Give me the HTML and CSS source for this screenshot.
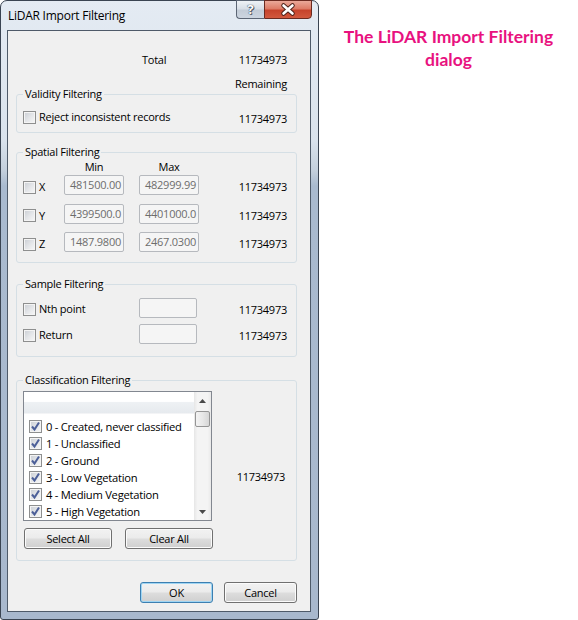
FILE: index.html
```html
<!DOCTYPE html>
<html lang="en">
<head>
    <meta charset="UTF-8">
    <title>LiDAR Import Filtering</title>
    <link rel="stylesheet" href="styles.css">
</head>
<body>
<div class="page">
    <div class="window">
        <div class="titlebar">
            <span class="title">LiDAR Import Filtering</span>
            <div class="caption-btns">
                <span class="cap-help">?</span>
                <span class="cap-close">
                    <svg width="46" height="17" viewBox="0 0 46 17">
                        <path d="M18.5 4.5 L27.5 12.5 M27.5 4.5 L18.5 12.5" stroke="#4a2018" stroke-width="4.5" stroke-linecap="round"/>
                        <path d="M18.5 4.5 L27.5 12.5 M27.5 4.5 L18.5 12.5" stroke="#ffffff" stroke-width="2.6" stroke-linecap="round"/>
                    </svg>
                </span>
            </div>
        </div>
        <div class="frame">
            <div class="client">
                <div class="totals">
                    <div class="total-row"><span class="total-label">Total</span><span class="count">11734973</span></div>
                    <div class="remain-row">Remaining</div>
                </div>

                <fieldset class="group validity">
                    <legend>Validity Filtering</legend>
                    <div class="check-row">
                        <label class="opt"><span class="check"></span>Reject inconsistent records</label>
                        <span class="count">11734973</span>
                    </div>
                </fieldset>

                <fieldset class="group spatial">
                    <legend>Spatial Filtering</legend>
                    <div class="range-head"><span></span><span>Min</span><span>Max</span></div>
                    <div class="range-row">
                        <label class="opt"><span class="check"></span>X</label>
                        <div class="field">481500.00</div>
                        <div class="field">482999.99</div>
                        <span class="count">11734973</span>
                    </div>
                    <div class="range-row">
                        <label class="opt"><span class="check"></span>Y</label>
                        <div class="field">4399500.0</div>
                        <div class="field">4401000.0</div>
                        <span class="count">11734973</span>
                    </div>
                    <div class="range-row">
                        <label class="opt"><span class="check"></span>Z</label>
                        <div class="field">1487.9800</div>
                        <div class="field">2467.0300</div>
                        <span class="count">11734973</span>
                    </div>
                </fieldset>

                <fieldset class="group sample">
                    <legend>Sample Filtering</legend>
                    <div class="sample-row">
                        <label class="opt"><span class="check"></span>Nth point</label>
                        <div class="field empty"></div>
                        <span class="count">11734973</span>
                    </div>
                    <div class="sample-row">
                        <label class="opt"><span class="check"></span>Return</label>
                        <div class="field empty"></div>
                        <span class="count">11734973</span>
                    </div>
                </fieldset>

                <fieldset class="group classes">
                    <legend>Classification Filtering</legend>
                    <div class="class-body">
                        <div class="listbox">
                            <div class="list-area">
                                <div class="list-header"></div>
                                <ul class="list-items">
                                    <li><span class="check on"><svg width="11" height="11" viewBox="0 0 11 11"><path d="M2 5.5 L4.5 8.5 L9 1.5" fill="none" stroke="#4c5f98" stroke-width="2"/></svg></span>0 - Created, never classified</li>
                                    <li><span class="check on"><svg width="11" height="11" viewBox="0 0 11 11"><path d="M2 5.5 L4.5 8.5 L9 1.5" fill="none" stroke="#4c5f98" stroke-width="2"/></svg></span>1 - Unclassified</li>
                                    <li><span class="check on"><svg width="11" height="11" viewBox="0 0 11 11"><path d="M2 5.5 L4.5 8.5 L9 1.5" fill="none" stroke="#4c5f98" stroke-width="2"/></svg></span>2 - Ground</li>
                                    <li><span class="check on"><svg width="11" height="11" viewBox="0 0 11 11"><path d="M2 5.5 L4.5 8.5 L9 1.5" fill="none" stroke="#4c5f98" stroke-width="2"/></svg></span>3 - Low Vegetation</li>
                                    <li><span class="check on"><svg width="11" height="11" viewBox="0 0 11 11"><path d="M2 5.5 L4.5 8.5 L9 1.5" fill="none" stroke="#4c5f98" stroke-width="2"/></svg></span>4 - Medium Vegetation</li>
                                    <li><span class="check on"><svg width="11" height="11" viewBox="0 0 11 11"><path d="M2 5.5 L4.5 8.5 L9 1.5" fill="none" stroke="#4c5f98" stroke-width="2"/></svg></span>5 - High Vegetation</li>
                                </ul>
                            </div>
                            <div class="vscroll">
                                <div class="arrow"><svg width="7" height="4" viewBox="0 0 7 4"><path d="M0 4 L3.5 0 L7 4 Z" fill="#4a4a4a"/></svg></div>
                                <div class="track"><div class="thumb"></div></div>
                                <div class="arrow"><svg width="7" height="4" viewBox="0 0 7 4"><path d="M0 0 L7 0 L3.5 4 Z" fill="#4a4a4a"/></svg></div>
                            </div>
                        </div>
                        <span class="count class-count">11734973</span>
                    </div>
                    <div class="class-btns">
                        <button class="btn wide">Select All</button>
                        <button class="btn wide">Clear All</button>
                    </div>
                </fieldset>

                <div class="footer">
                    <button class="btn default">OK</button>
                    <button class="btn">Cancel</button>
                </div>
            </div>
        </div>
    </div>
    <div class="caption">The LiDAR Import Filtering<br>dialog</div>
</div>
</body>
</html>
```

FILE: styles.css
```css
body {
    margin: 0;
    font-family: "Open Sans", "Noto Sans", sans-serif;
    font-size: 11px;
    letter-spacing: -0.25px;
    color: #000;
    background: #fff;
}
.page {
    display: flex;
}
.window {
    width: 319px;
    height: 620px;
    box-sizing: border-box;
    border: 1px solid #3a4452;
    border-radius: 7px 7px 3px 3px;
    background: linear-gradient(to bottom, #e4ebf3 0, #d9e2ec 140px, #c3cfdc 170px, #a9bacf 185px, #a8b8cd 100%);
    display: flex;
    flex-direction: column;
}
.titlebar {
    height: 29px;
    display: flex;
    align-items: flex-start;
    padding: 0 6px 0 7px;
}
.title {
    line-height: 29px;
    font-size: 12px;
}
.caption-btns {
    margin-left: auto;
    margin-top: -1px;
    display: flex;
    height: 19px;
}
.cap-help {
    width: 28px;
    height: 19px;
    box-sizing: border-box;
    border: 1px solid #5b6574;
    border-right: none;
    border-radius: 0 0 0 4px;
    background: linear-gradient(to bottom, #eef2f6 0, #d8dfe7 45%, #c3ccd7 55%, #ccd5e0 100%);
    color: #fff;
    font-weight: bold;
    font-size: 13px;
    line-height: 17px;
    text-align: center;
    text-shadow: 0 0 1px #3b4350, 0 0 1px #3b4350, 1px 1px 0 #5b6574;
}
.cap-close {
    width: 48px;
    height: 19px;
    box-sizing: border-box;
    border: 1px solid #6a2a20;
    border-radius: 0 0 4px 0;
    background: linear-gradient(to bottom, #eaa999 0, #dd7c67 45%, #c6432b 55%, #d2583d 100%);
    display: flex;
    align-items: center;
    justify-content: center;
}
.frame {
    flex: 1;
    display: flex;
    padding: 0 7px 7px 6px;
}
.client {
    flex: 1;
    border: 1px solid #4e5a69;
    background: #f0f0f0;
}
.totals {
    height: 56px;
    padding-top: 21px;
    box-sizing: border-box;
}
.total-row {
    display: flex;
    line-height: 16px;
    padding: 0 23px 0 134px;
}
.total-row .count {
    margin-left: auto;
}
.remain-row {
    margin-top: 8px;
    line-height: 16px;
    text-align: right;
    padding-right: 23px;
}
.count {
    line-height: 16px;
    white-space: nowrap;
}

/* group boxes */
.group {
    margin: 0 13px 0 8px;
    padding: 0 9px 0 6px;
    border: 1px solid #d5dfe5;
    border-radius: 3px;
    min-width: 0;
}
.group legend {
    padding: 0 2px;
    line-height: 14px;
}
.validity {
    padding-top: 6px;
    padding-bottom: 5px;
}
.spatial {
    margin-top: 12px;
    padding-bottom: 10px;
}
.sample {
    margin-top: 14px;
    padding-top: 7px;
    padding-bottom: 12px;
}
.classes {
    margin-top: 16px;
    padding-top: 4px;
    padding-bottom: 11px;
}

.opt {
    display: flex;
    align-items: center;
    gap: 3px;
    line-height: 16px;
    white-space: nowrap;
}
.check {
    width: 13px;
    height: 13px;
    box-sizing: border-box;
    border: 1px solid #8e8f8f;
    background: linear-gradient(135deg, #c9cdd3 0, #e3e5e8 50%, #f8f8f8 100%);
    box-shadow: inset 0 0 0 1px #f4f4f4;
    flex: none;
    display: flex;
    align-items: center;
    justify-content: center;
}
.check-row {
    height: 20px;
    display: flex;
    align-items: center;
    justify-content: space-between;
}
.check-row .count {
    padding-top: 3px;
}

.range-head {
    display: grid;
    grid-template-columns: 41px 75px 60px;
    padding-top: 1px;
    line-height: 14px;
}
.range-head span {
    width: 60px;
    text-align: center;
}
.range-row {
    display: grid;
    grid-template-columns: 41px 75px 60px 1fr;
    align-items: start;
    height: 20px;
    margin-top: 8.5px;
}
.range-head + .range-row {
    margin-top: 1px;
}
.range-row .field {
    width: 60px;
}
.range-row .opt {
    margin-top: 4px;
}
.range-row .count,
.sample-row .count {
    justify-self: end;
    margin-top: 4px;
}
.field {
    height: 20px;
    box-sizing: border-box;
    border: 1px solid #b6b9be;
    border-radius: 2px;
    background: #f5f5f5;
    color: #6d6d6d;
    padding: 0 5px;
    line-height: 18px;
    overflow: hidden;
    white-space: nowrap;
}
.sample-row {
    display: grid;
    grid-template-columns: 116px 58px 1fr;
    align-items: start;
    height: 20px;
}
.sample-row + .sample-row {
    margin-top: 6px;
}
.sample-row .opt {
    margin-top: 3px;
}

/* classification list */
.class-body {
    display: flex;
    align-items: flex-start;
}
.listbox {
    width: 189px;
    height: 130px;
    box-sizing: border-box;
    border: 1px solid #828790;
    background: #fff;
    display: flex;
}
.list-area {
    flex: 1;
    min-width: 0;
}
.list-header {
    height: 22px;
    background: linear-gradient(to bottom, #fff 0, #fff 45%, #eef1f4 50%, #e6eaee 100%);
    border-bottom: 1px solid #f3f4f6;
    box-sizing: border-box;
}
.list-items {
    list-style: none;
    margin: 0;
    padding: 4px 0 0 5px;
}
.list-items li {
    height: 17px;
    display: flex;
    align-items: center;
    gap: 4px;
    white-space: nowrap;
    font-size: 11.2px;
}
.check.on svg {
    display: block;
}
.vscroll {
    width: 17px;
    display: flex;
    flex-direction: column;
    background: linear-gradient(to right, #e6e6e6 0, #f4f4f4 20%, #f4f4f4 80%, #e9e9e9 100%);
}
.arrow {
    height: 17px;
    display: flex;
    align-items: center;
    justify-content: center;
}
.track {
    flex: 1;
    padding-top: 2px;
}
.thumb {
    height: 16px;
    margin: 0 1px;
    box-sizing: border-box;
    border: 1px solid #959595;
    border-radius: 2px;
    background: linear-gradient(to right, #f3f3f3 0, #e8e8e8 50%, #d6d6d6 100%);
}
.class-count {
    margin-top: 78px;
    margin-left: auto;
    margin-right: 2px;
}
.class-btns {
    display: flex;
    gap: 13px;
    margin-top: 7px;
    padding-left: 1px;
}

/* push buttons */
.btn {
    height: 21px;
    box-sizing: border-box;
    border: 1px solid #707070;
    border-radius: 3px;
    background: linear-gradient(to bottom, #f2f2f2 0, #ebebeb 48%, #dddddd 52%, #cfcfcf 100%);
    box-shadow: inset 0 0 0 1px #fbfbfb;
    font: inherit;
    letter-spacing: inherit;
    color: #000;
    padding: 0;
    line-height: 19px;
    text-align: center;
    width: 73px;
}
.btn.wide {
    width: 88px;
}
.btn.default {
    border-color: #3c7fb1;
    box-shadow: inset 0 0 0 1px #9fd5f3;
}
.footer {
    display: flex;
    justify-content: flex-end;
    gap: 11px;
    margin-top: 21px;
    padding-right: 13px;
}

.caption {
    flex: 1;
    text-align: center;
    padding-top: 25px;
    font-family: Lato, "Open Sans", sans-serif;
    font-weight: bold;
    font-size: 17.5px;
    letter-spacing: 0;
    line-height: 23px;
    color: #e8127f;
}
```
